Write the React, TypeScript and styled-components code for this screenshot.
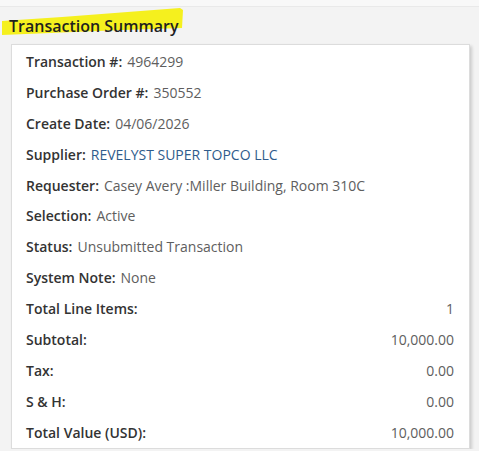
import styled, { createGlobalStyle } from "styled-components"

const Global = createGlobalStyle`
  body {
    margin: 0;
    background: #f3f3f3;
    font-family: "Open Sans", "Liberation Sans", sans-serif;
  }
`

const TopBand = styled.div`
  height: 6px;
  background: #f8f8f8;
  border-bottom: 1px solid #e9e9e9;
`

const TitleWrap = styled.div`
  position: relative;
  margin: 7px 0 6px 9px;
  height: 24px;
`

const Highlight = styled.svg`
  position: absolute;
  left: -7px;
  top: -7px;
  width: 190px;
  height: 32px;
`

const Title = styled.h2`
  position: relative;
  margin: 0;
  font-size: 16px;
  line-height: 24px;
  font-weight: 600;
  color: #1f1f1f;
`

const Panel = styled.div`
  margin: 0 9px 0 11px;
  background: #fff;
  border: 1px solid #dcdcdc;
  box-shadow: 2px 2px 3px rgba(0, 0, 0, 0.16);
  padding: 1px 15px 0 14px;
`

const Row = styled.div`
  display: flex;
  align-items: center;
  height: 30.9px;
  font-size: 14px;
`

const Label = styled.span`
  font-weight: 600;
  color: #333;
  margin-right: 5px;
`

const Value = styled.span<{ $link?: boolean; $right?: boolean }>`
  color: ${(p) => (p.$link ? "#2f5c8c" : "#5e5e5e")};
  margin-left: ${(p) => (p.$right ? "auto" : "0")};
`

const info: [string, string, boolean?][] = [
  ["Transaction #:", "4964299"],
  ["Purchase Order #:", "350552"],
  ["Create Date:", "04/06/2026"],
  ["Supplier:", "REVELYST SUPER TOPCO LLC", true],
  ["Requester:", "Casey Avery :Miller Building, Room 310C"],
  ["Selection:", "Active"],
  ["Status:", "Unsubmitted Transaction"],
  ["System Note:", "None"],
]

const totals: [string, string][] = [
  ["Total Line Items:", "1"],
  ["Subtotal:", "10,000.00"],
  ["Tax:", "0.00"],
  ["S & H:", "0.00"],
  ["Total Value (USD):", "10,000.00"],
]

const App = () => {
  return (
    <>
      <Global />
      <TopBand />
      <TitleWrap>
        <Highlight viewBox="0 0 190 32">
          <polygon points="0,14 60,10 178,1 181,3 180,21 120,23 0,28" fill="#f5f01e" />
        </Highlight>
        <Title>Transaction Summary</Title>
      </TitleWrap>
      <Panel>
        {info.map(([l, v, link]) => (
          <Row key={l}>
            <Label>{l}</Label>
            <Value $link={link}>{v}</Value>
          </Row>
        ))}
        {totals.map(([l, v]) => (
          <Row key={l}>
            <Label>{l}</Label>
            <Value $right>{v}</Value>
          </Row>
        ))}
      </Panel>
    </>
  )
}

export default App
